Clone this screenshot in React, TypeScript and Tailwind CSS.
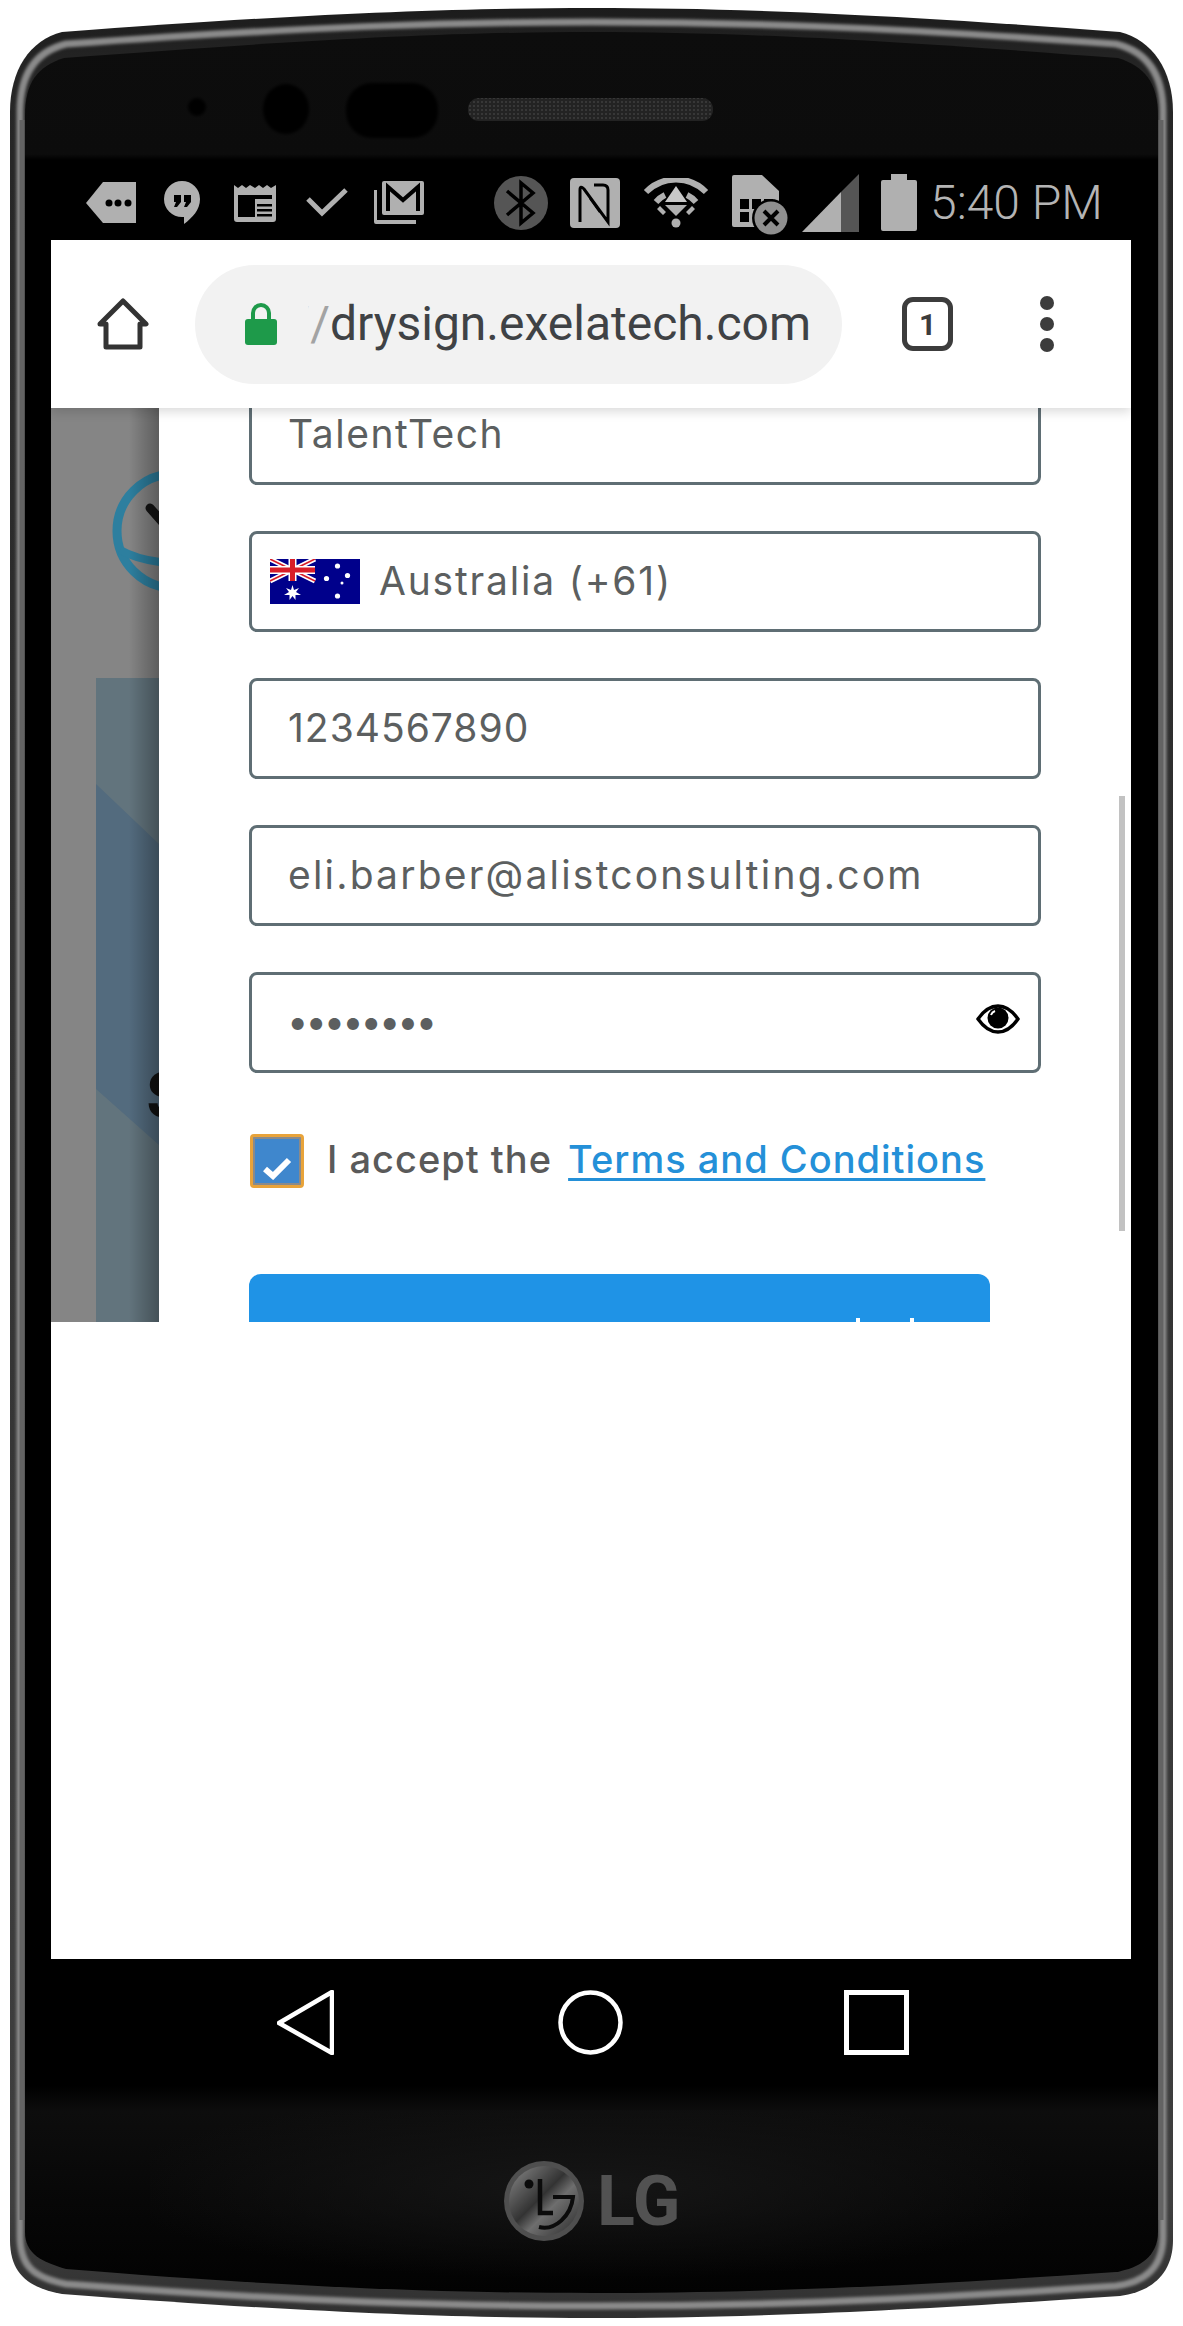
const PhoneBody = () => (
  <svg className="absolute inset-0" width="1183" height="2326" viewBox="0 0 1183 2326">
    <defs>
      <linearGradient id="edge" x1="0" y1="0" x2="0" y2="1">
        <stop offset="0" stopColor="#1c1c1c" />
        <stop offset="0.03" stopColor="#262626" />
        <stop offset="0.95" stopColor="#3f3f3f" />
        <stop offset="1" stopColor="#303030" />
      </linearGradient>
      <linearGradient id="face" x1="0" y1="0" x2="0" y2="1">
        <stop offset="0" stopColor="#0d0d0d" />
        <stop offset="0.054" stopColor="#0c0c0c" />
        <stop offset="0.0566" stopColor="#000000" />
        <stop offset="0.908" stopColor="#000000" />
        <stop offset="0.92" stopColor="#0d0d0d" />
        <stop offset="0.96" stopColor="#070707" />
        <stop offset="1" stopColor="#020202" />
      </linearGradient>
      <radialGradient id="chin" cx="0.5" cy="0.45" r="0.55">
        <stop offset="0" stopColor="#161616" />
        <stop offset="1" stopColor="#161616" stopOpacity="0" />
      </radialGradient>
      <pattern id="mesh" width="4" height="4" patternUnits="userSpaceOnUse">
        <rect width="4" height="4" fill="#232323" />
        <circle cx="2" cy="2" r="1" fill="#3d3d3d" />
      </pattern>
      <filter id="soft">
        <feGaussianBlur stdDeviation="1.6" />
      </filter>
    </defs>
    <path
      d="M10 112C10 70 30 40 62 32C300 14 450 8 592 8C735 8 885 14 1120 32C1152 40 1173 70 1173 112L1173 2240C1173 2275 1150 2292 1120 2296C885 2312 735 2318 592 2318C450 2318 300 2312 62 2294C30 2288 10 2275 10 2240Z"
      fill="url(#edge)"
    />
    <path
      d="M20 112C20 76 34 52 66 44C300 27 450 22 592 22C735 22 885 27 1116 44C1148 52 1163 76 1163 112L1163 2236C1163 2268 1145 2282 1116 2286C885 2302 735 2306 592 2306C450 2306 300 2302 66 2284C36 2278 20 2268 20 2236Z"
      fill="none"
      stroke="#8a8a8a"
      strokeWidth="7"
      filter="url(#soft)"
    />
    <path d="M15 120L15 2220" stroke="#d5d5d5" strokeWidth="5" filter="url(#soft)" />
    <path d="M1168 120L1168 2220" stroke="#cfcfcf" strokeWidth="5" filter="url(#soft)" />
    <path d="M22 120L22 2220" stroke="#636363" strokeWidth="5" />
    <path d="M1161 120L1161 2220" stroke="#636363" strokeWidth="5" />
    <path
      d="M25 116C25 82 38 66 64 58C300 40 450 32 592 32C735 32 885 40 1118 58C1144 66 1158 82 1158 116L1158 2232C1158 2256 1140 2268 1116 2272C885 2288 735 2293 592 2293C450 2293 300 2288 66 2269C42 2262 25 2254 25 2232Z"
      fill="url(#face)"
    />
    <rect x="150" y="2110" width="880" height="170" fill="url(#chin)" />
    <circle cx="197" cy="107" r="9" fill="#030303" filter="url(#soft)" />
    <ellipse cx="286" cy="109" rx="23" ry="25" fill="#030303" filter="url(#soft)" />
    <rect x="346" y="83" width="92" height="55" rx="26" fill="#030303" filter="url(#soft)" />
    <rect x="468" y="98" width="245" height="23" rx="11" fill="url(#mesh)" />
  </svg>
);

const iconFill = "#b0b0b0";

const TagIcon = () => (
  <svg width="50" height="41" viewBox="0 0 50 41">
    <path d="M0 21L17 0H50V41H17Z" fill={iconFill} />
    <circle cx="23" cy="21" r="3.5" fill="#000" />
    <circle cx="32" cy="21" r="3.5" fill="#000" />
    <circle cx="42" cy="21" r="3.5" fill="#000" />
  </svg>
);

const HangoutsIcon = () => (
  <svg width="36" height="44" viewBox="0 0 36 44">
    <path d="M18 0A18 18 0 0 1 36 18C36 29 28 37 20 43V36H18A18 18 0 0 1 18 0Z" fill={iconFill} />
    <path d="M10 14H17V21L13 26H10L12 21H10ZM20 14H27V21L23 26H20L22 21H20Z" fill="#000" />
  </svg>
);

const NewsIcon = () => (
  <svg width="42" height="38" viewBox="0 0 42 38">
    <path d="M0 1L4 4L8 1L12 4L16 1L21 4L25 1L29 4L33 1L37 4L42 1V35Q42 38 39 38H3Q0 38 0 35Z" fill={iconFill} />
    <rect x="4" y="11" width="17" height="22" fill="#000" />
    <rect x="23" y="20" width="15" height="2.5" fill="#000" />
    <rect x="23" y="25" width="15" height="2.5" fill="#000" />
    <rect x="23" y="30" width="15" height="2.5" fill="#000" />
    <rect x="4" y="11" width="34" height="4" fill="#000" />
  </svg>
);

const CheckIcon = () => (
  <svg width="42" height="29" viewBox="0 0 42 29">
    <path d="M2 11L16 25L40 2" fill="none" stroke={iconFill} strokeWidth="5" />
  </svg>
);

const GmailIcon = () => (
  <svg width="50" height="43" viewBox="0 0 50 43">
    <path d="M0 9H3V39H42V43H2Q0 43 0 41Z" fill={iconFill} />
    <rect x="8" y="0" width="42" height="34" rx="2" fill={iconFill} />
    <path d="M14 30V6L29 19L44 6V30" fill="none" stroke="#000" strokeWidth="4" />
  </svg>
);

const BluetoothIcon = () => (
  <svg width="54" height="54" viewBox="0 0 54 54">
    <circle cx="27" cy="27" r="27" fill="#555555" />
    <path d="M13 15L39 37L27 47V7L39 17L13 39" fill="none" stroke="#000" strokeWidth="3.5" />
  </svg>
);

const NfcIcon = () => (
  <svg width="50" height="50" viewBox="0 0 50 50">
    <rect width="50" height="50" rx="4" fill={iconFill} />
    <path d="M10 44V12Q10 7 14 11L38 44V12Q38 7 33 7H24" fill="none" stroke="#000" strokeWidth="3" />
    <path d="M20 20L30 34" stroke="#000" strokeWidth="2.5" />
  </svg>
);

const WifiIcon = () => (
  <svg width="66" height="50" viewBox="0 0 66 50">
    <path d="M3 14A42 42 0 0 1 63 14" fill="none" stroke={iconFill} strokeWidth="6" />
    <path d="M13 24A28 28 0 0 1 22 17" fill="none" stroke={iconFill} strokeWidth="6" />
    <path d="M53 24A28 28 0 0 0 44 17" fill="none" stroke={iconFill} strokeWidth="6" />
    <path d="M33 8L44 24H22Z" fill="#c8c8c8" />
    <path d="M22 27H44L33 38Z" fill={iconFill} />
    <path d="M17 28L23 34L20 37L14 31ZM49 28L43 34L46 37L52 31Z" fill={iconFill} />
    <circle cx="33" cy="45" r="4.5" fill={iconFill} />
  </svg>
);

const SimIcon = () => (
  <svg className="relative top-[2px]" width="56" height="60" viewBox="0 0 56 60">
    <path d="M2 0H30L47 16V50Q47 52 45 52H2Q0 52 0 50V2Q0 0 2 0Z" fill={iconFill} />
    <rect x="8" y="24" width="9" height="10" fill="#000" />
    <rect x="20" y="24" width="9" height="10" fill="#000" />
    <rect x="32" y="24" width="9" height="10" fill="#000" />
    <rect x="8" y="37" width="9" height="10" fill="#000" />
    <circle cx="39" cy="43" r="19" fill="#000" />
    <circle cx="39" cy="43" r="16.5" fill="#8f8f8f" />
    <path d="M32 36L46 50M46 36L32 50" stroke="#000" strokeWidth="4" />
  </svg>
);

const SignalIcon = () => (
  <svg width="57" height="58" viewBox="0 0 57 58">
    <path d="M0 58L39 18V58Z" fill={iconFill} />
    <path d="M39 18L57 0V58H39Z" fill="#555555" />
  </svg>
);

const BatteryIcon = () => (
  <svg width="36" height="57" viewBox="0 0 36 57">
    <path d="M10 0H26V6H34Q36 6 36 8V55Q36 57 34 57H2Q0 57 0 55V8Q0 6 2 6H10Z" fill={iconFill} />
  </svg>
);

const StatusBar = () => (
  <div className="flex h-[80px] items-center pl-[35px] pt-[5px]">
    <TagIcon />
    <div className="ml-[28px]">
      <HangoutsIcon />
    </div>
    <div className="ml-[34px]">
      <NewsIcon />
    </div>
    <div className="ml-[30px]">
      <CheckIcon />
    </div>
    <div className="ml-[26px]">
      <GmailIcon />
    </div>
    <div className="ml-[70px]">
      <BluetoothIcon />
    </div>
    <div className="ml-[22px]">
      <NfcIcon />
    </div>
    <div className="ml-[23px]">
      <WifiIcon />
    </div>
    <div className="ml-[23px]">
      <SimIcon />
    </div>
    <div className="ml-[14px]">
      <SignalIcon />
    </div>
    <div className="ml-[22px]">
      <BatteryIcon />
    </div>
    <span className="ml-[13px] font-['Roboto',sans-serif] text-[48px] font-light leading-none text-[#b4b4b4]">
      5:40 PM
    </span>
  </div>
);

const Toolbar = () => (
  <div className="relative z-10 flex h-[168px] items-center bg-white pl-[46px] shadow-[0_4px_10px_rgba(0,0,0,0.14)]">
    <svg width="52" height="52" viewBox="0 0 52 52">
      <path d="M26 3L49 26H43V49H9V26H3Z" fill="none" stroke="#333333" strokeWidth="5" strokeLinejoin="round" />
    </svg>
    <div className="ml-[46px] flex h-[119px] w-[647px] items-center rounded-full bg-[#f2f2f2] pl-[50px]">
      <svg width="32" height="42" viewBox="0 0 32 42">
        <path d="M8 18V10A8 8 0 0 1 24 10V18" fill="none" stroke="#1e9a4a" strokeWidth="4" />
        <rect y="16" width="32" height="26" rx="3" fill="#1e9a4a" />
      </svg>
      <div className="ml-[31px] flex w-[503px] justify-end overflow-hidden font-['Roboto',sans-serif] text-[48px] leading-[60px] text-[#3f4245]">
        <span className="shrink-0 text-[#dcdcdc]">/</span>
        <span className="shrink-0 text-[#a3a3a3]">/</span>
        <span className="shrink-0">drysign.exelatech.com</span>
      </div>
    </div>
    <div className="ml-[60px] flex h-[54px] w-[51px] items-center justify-center rounded-[11px] border-[5px] border-[#3c3c3c] font-['Roboto',sans-serif] text-[30px] font-bold text-[#3c3c3c]">
      1
    </div>
    <div className="ml-[87px] flex flex-col gap-[7px]">
      <div className="h-[14px] w-[14px] rounded-full bg-[#3c3c3c]" />
      <div className="h-[14px] w-[14px] rounded-full bg-[#3c3c3c]" />
      <div className="h-[14px] w-[14px] rounded-full bg-[#3c3c3c]" />
    </div>
  </div>
);

const Backdrop = () => (
  <div className="relative flex w-[108px] shrink-0 flex-col overflow-hidden bg-[#858585]">
    <div className="h-[270px] shrink-0" />
    <div className="relative ml-[45px] flex-1 overflow-hidden bg-[#62747d]">
      <svg className="absolute inset-0" width="63" height="644" viewBox="0 0 63 644">
        <polygon points="0,106 63,166 63,467 0,411" fill="#536b7e" />
      </svg>
    </div>
    <svg className="absolute left-[61px] top-[50px]" width="124" height="140" viewBox="0 0 124 140">
      <circle cx="62" cy="73" r="57" fill="none" stroke="#2d7f9f" strokeWidth="9" />
      <path d="M8 92Q30 104 62 105" fill="none" stroke="#2d7f9f" strokeWidth="8" />
      <path d="M38 50L54 68" stroke="#141414" strokeWidth="9" strokeLinecap="round" />
    </svg>
    <span className="absolute left-[95px] top-[656px] font-['Inter',sans-serif] text-[62px] font-bold leading-none text-[#111111]">
      S
    </span>
    <div className="absolute inset-y-0 right-0 w-[30px] bg-gradient-to-r from-transparent to-black/30" />
  </div>
);

const fieldText = "font-['Inter',sans-serif] text-[39px] font-normal text-[#5c5f60]";

const Field = ({ children, className = "" }: { children: React.ReactNode; className?: string }) => (
  <div className={`flex h-[101px] w-[792px] shrink-0 items-center rounded-[8px] border-[3px] border-[#5f6e74] bg-white ${className}`}>
    {children}
  </div>
);

const AustraliaFlag = () => (
  <svg width="90" height="45" viewBox="0 0 90 45">
    <rect width="90" height="45" fill="#00008b" />
    <path d="M0 0L45 22M45 0L0 22" stroke="#fff" strokeWidth="5" />
    <path d="M0 0L45 22M45 0L0 22" stroke="#d81e28" strokeWidth="1.6" />
    <path d="M22.5 0V22M0 11H45" stroke="#fff" strokeWidth="8" />
    <path d="M22.5 0V22M0 11H45" stroke="#d81e28" strokeWidth="5" />
    <path d="M22.5 26L24 31L29 29L26 33L31 36L25.5 36L25.5 41L22.5 37L19.5 41L19.5 36L14 36L19 33L16 29L21 31Z" fill="#fff" />
    <circle cx="67.5" cy="7" r="2.6" fill="#fff" />
    <circle cx="56.5" cy="19.5" r="2.6" fill="#fff" />
    <circle cx="77.5" cy="16.5" r="2.6" fill="#fff" />
    <circle cx="72" cy="24" r="1.5" fill="#fff" />
    <circle cx="67.5" cy="37" r="2.6" fill="#fff" />
  </svg>
);

const EyeIcon = () => (
  <svg width="44" height="30" viewBox="0 0 44 30">
    <path d="M2 15C9 5 15 2 22 2C29 2 35 5 42 15C35 25 29 28 22 28C15 28 9 25 2 15Z" fill="none" stroke="#000" strokeWidth="3.4" />
    <circle cx="22" cy="14" r="10.5" fill="#000" />
    <path d="M15 11A7 7 0 0 1 19 7" fill="none" stroke="#fff" strokeWidth="2" />
  </svg>
);

const SignupForm = () => (
  <div className="relative flex-1 overflow-hidden bg-white pl-[90px]">
    <div className="-mt-[24px] flex flex-col gap-[46px]">
      <Field className="pl-[36px]">
        <span className={`tracking-[1.5px] ${fieldText}`}>TalentTech</span>
      </Field>
      <Field className="pl-[18px]">
        <AustraliaFlag />
        <span className={`ml-[19px] tracking-[1.8px] ${fieldText}`}>Australia (+61)</span>
      </Field>
      <Field className="pl-[36px]">
        <span className={`tracking-[1px] ${fieldText}`}>1234567890</span>
      </Field>
      <Field className="pl-[36px]">
        <span className={`tracking-[2.2px] ${fieldText}`}>eli.barber@alistconsulting.com</span>
      </Field>
      <Field className="justify-between pl-[35px] pr-[18px]">
        <span className="-mt-[2px] font-['Inter',sans-serif] text-[38px] tracking-[-3px] text-[#5c5f60]">••••••••</span>
        <div className="-mt-[7px]">
          <EyeIcon />
        </div>
      </Field>
    </div>

    <div className="mt-[61px] flex items-center">
      <div className="ml-[1px] flex h-[54px] w-[54px] items-end justify-center rounded-[4px] border-[3px] border-[#e8a33a] bg-[#3f87cd] shadow-[inset_0_0_0_2px_#8a8a8a]">
        <svg className="mb-[5px]" width="30" height="24" viewBox="0 0 30 24">
          <path d="M3 13L11 20L27 4" fill="none" stroke="#fff" strokeWidth="6" />
        </svg>
      </div>
      <p className="mb-[3px] ml-[23px] font-['Inter',sans-serif] text-[38px] font-medium leading-[51px] tracking-[1px] text-[#5a5a5a]">
        I accept the{" "}
        <a href="#" className="ml-[5px] text-[#2490d8] underline decoration-[3px] underline-offset-[5px]">
          Terms and Conditions
        </a>
      </p>
    </div>

    <div className="mt-[86px] flex h-[48px] w-[741px] items-end rounded-t-[12px] bg-[#1f93e6] pl-[607px]">
      <div className="h-[4px] w-[4px] bg-white" />
      <div className="ml-[50px] h-[4px] w-[4px] bg-white" />
    </div>

    <div className="absolute left-[960px] top-[388px] h-[435px] w-[6px] bg-[#c2c2c2]" />
  </div>
);

const NavBar = () => (
  <div className="flex h-[126px] items-center pl-[226px]">
    <svg width="57" height="65" viewBox="0 0 57 65">
      <path d="M55 2V63L2 33Z" fill="none" stroke="#fff" strokeWidth="4.5" strokeLinejoin="round" />
    </svg>
    <svg className="ml-[224px]" width="65" height="65" viewBox="0 0 65 65">
      <circle cx="32.5" cy="32.5" r="30" fill="none" stroke="#fff" strokeWidth="4.5" />
    </svg>
    <svg className="ml-[221px]" width="65" height="65" viewBox="0 0 65 65">
      <rect x="2.5" y="2.5" width="60" height="60" fill="none" stroke="#fff" strokeWidth="5" />
    </svg>
  </div>
);

const LgLogo = () => (
  <div className="ml-[452px] mt-[76px] flex items-center">
    <svg width="82" height="80" viewBox="0 0 82 80">
      <defs>
        <linearGradient id="metal" x1="0" y1="0" x2="1" y2="1">
          <stop offset="0" stopColor="#8a8a8a" />
          <stop offset="0.45" stopColor="#333333" />
          <stop offset="0.6" stopColor="#6e6e6e" />
          <stop offset="1" stopColor="#2a2a2a" />
        </linearGradient>
      </defs>
      <circle cx="41" cy="40" r="40" fill="#4f4f4f" />
      <circle cx="41" cy="40" r="35" fill="url(#metal)" />
      <circle cx="26" cy="23" r="4.5" fill="#0b0b0b" />
      <path d="M37 18V52H50" fill="none" stroke="#0b0b0b" strokeWidth="4.5" />
      <path d="M50 36H70C68 55 52 70 36 66" fill="none" stroke="#0b0b0b" strokeWidth="4" />
    </svg>
    <span className="ml-[12px] font-['Roboto',sans-serif] text-[70px] font-bold leading-none text-[#525252]">
      LG
    </span>
  </div>
);

export default function App() {
  return (
    <div className="relative h-[2326px] w-[1183px] overflow-hidden bg-white">
      <PhoneBody />
      <div className="relative ml-[51px] w-[1080px] pt-[160px]">
        <StatusBar />
        <Toolbar />
        <div className="flex h-[914px]">
          <Backdrop />
          <SignupForm />
        </div>
        <div className="h-[637px] bg-white" />
        <NavBar />
        <LgLogo />
      </div>
    </div>
  );
}
